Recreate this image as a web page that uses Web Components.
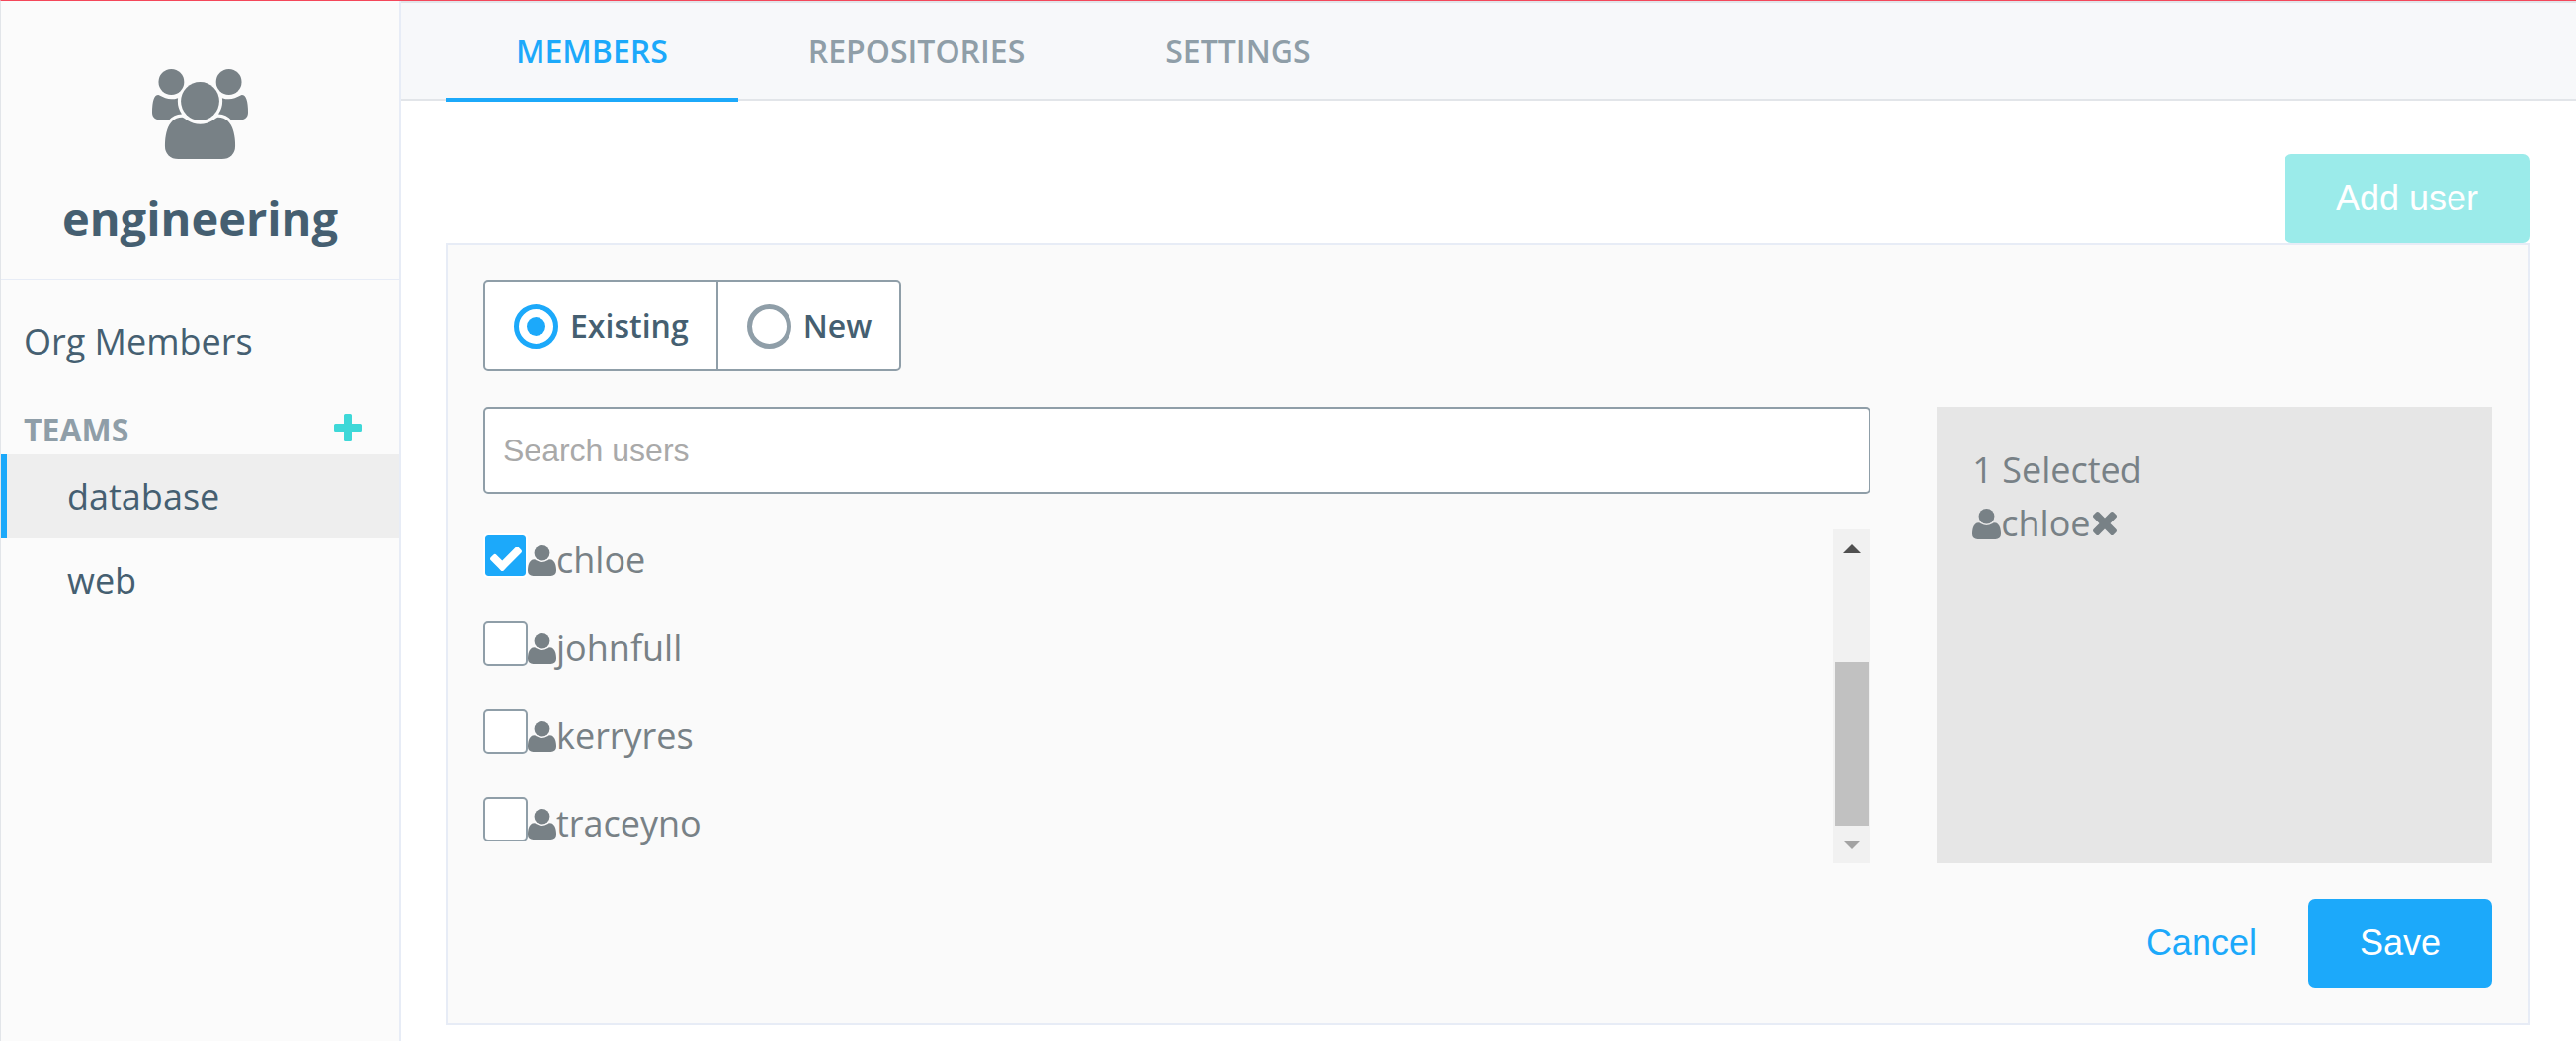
<!DOCTYPE html>
<html lang="en">
<head>
<meta charset="utf-8">
<title>engineering - Members</title>
<style>
  :root {
    --blue: #1ca9fa;
    --teal: #3ed8d8;
    --ink: #455f71;
    --muted: #8f9ea8;
    --grey: #788186;
    --line: #e7ecf6;
    --rule: #e2e5e9;
    --ui: "Open Sans", "Noto Sans", sans-serif;
    --control: "Liberation Sans", Arial, sans-serif;
  }
  html { background: #fff; }
  body { margin: 0; font: 36px/50px var(--ui); color: var(--grey); }
</style>
</head>
<body>
<org-page></org-page>

<script>
const PERSON = `<path d="M1664 1533q0 120-73 189.500t-194 69.500h-874q-121 0-194-69.500t-73-189.500q0-53 3.500-103.500t14-109 26.500-108.500 43-97.500 62-81 85.500-53.500 111.500-20q10 0 43 21.500t73 48 107 48 135 21.500 135-21.500 107-48 73-48 43-21.500q61 0 111.500 20t85.500 53.500 62 81 43 97.500 26.500 108.500 14 109 3.500 103.500z"/><circle cx="960" cy="640" r="384"/>`;

const ICONS = {
  users: ['0 0 1920 1792', PERSON + `<path d="M593 896q-162 5-265 128h-134q-82 0-138-40.500t-56-118.500q0-353 124-353 6 0 43.500 21t97.500 42.500 119 21.500q67 0 133-23-5 37-5 66 0 139 81 256z"/><path d="M1920 865q0 78-56 118.500t-138 40.500h-134q-103-123-265-128 81-117 81-256 0-29-5-66 66 23 133 23 59 0 119-21.500t97.500-42.500 43.500-21q124 0 124 353z"/><circle cx="384" cy="256" r="256"/><circle cx="1536" cy="256" r="256"/>`],
  user: ['256 256 1408 1536', PERSON],
  plus: ['0 0 28 32', `<path d="M11.500 0h5a1.500 1.500 0 0 1 1.500 1.500V10h8.500a1.500 1.500 0 0 1 1.500 1.500v5a1.500 1.500 0 0 1-1.500 1.500H18v8.500a1.500 1.500 0 0 1-1.500 1.500h-5a1.500 1.500 0 0 1-1.500-1.500V18H1.500A1.500 1.500 0 0 1 0 16.500v-5A1.500 1.500 0 0 1 1.500 10H10V1.500A1.500 1.500 0 0 1 11.500 0z"/>`],
  check: ['121 370 1550 1152', `<path d="M1671 566q0 40-28 68l-724 724-136 136q-28 28-68 28t-68-28l-136-136-362-362q-28-28-28-68t28-68l136-136q28-28 68-28t68 28l294 295 656-657q28-28 68-28t68 28l136 136q28 28 28 68z"/>`],
  times: ['302 366 1188 1188', `<path d="M1490 1322q0 40-28 68l-136 136q-28 28-68 28t-68-28l-294-294-294 294q-28 28-68 28t-68-28l-136-136q-28-28-28-68t28-68l294-294-294-294q-28-28-28-68t28-68l136-136q28-28 68-28t68 28l294 294 294-294q28-28 68-28t68 28l136 136q28 28 28 68t-28 68l-294 294 294 294q28 28 28 68z"/>`],
  up: ['0 0 18 9', `<path d="M0 9L9 0l9 9z"/>`],
  down: ['0 0 18 9', `<path d="M0 0l9 9 9-9z"/>`]
};

const BASE = `*, *::before, *::after { box-sizing: border-box; }
  button { font: inherit; color: inherit; background: none; border: 0; margin: 0; padding: 0; cursor: pointer; }
  a { color: inherit; text-decoration: none; }
  ul { list-style: none; margin: 0; padding: 0; }`;

function define(name, markup, setup) {
  const template = document.createElement('template');
  template.innerHTML = markup;
  customElements.define(name, class extends HTMLElement {
    constructor() {
      super();
      this.attachShadow({ mode: 'open' }).append(template.content.cloneNode(true));
    }
    connectedCallback() {
      if (setup && !this.ready) { this.ready = true; setup(this, this.shadowRoot); }
    }
  });
}

/* Icon: fills the box that its user gives it */
define('org-icon', `<style>
  :host { display: block; flex: none; }
  svg { display: block; width: 100%; height: 100%; fill: currentColor; }
</style><svg aria-hidden="true"></svg>`, (host, root) => {
  const [box, shape] = ICONS[host.getAttribute('name')];
  const svg = root.querySelector('svg');
  svg.setAttribute('viewBox', box);
  svg.setAttribute('preserveAspectRatio', 'none');
  svg.innerHTML = shape;
});

/* Push button: kind = primary | add | link */
define('org-button', `<style>${BASE}
  :host { display: block; }
  button { display: block; height: 90px; padding: 0 52px; border-radius: 7px; font: 36px/90px var(--control); color: #fff; background: var(--blue); }
  :host([kind="add"]) button { background: #9bebea; }
  :host([kind="link"]) button { background: none; color: var(--blue); }
</style><button type="button"><slot></slot></button>`);

define('org-sidebar', `<style>${BASE}
  :host { display: block; background: #fbfbfb; border-right: 2px solid var(--line); color: var(--ink); }
  header { display: flex; flex-direction: column; align-items: center; gap: 27px; padding: 69px 24px 28px; border-bottom: 2px solid var(--line); }
  header org-icon { width: 97px; height: 91px; color: var(--grey); }
  h1 { margin: 0; font-size: 47px; line-height: 66px; font-weight: 700; }
  .all { display: block; padding: 37px 23px 42px; }
  .head { display: flex; align-items: center; justify-content: space-between; padding: 0 38px 3px 23px; }
  h2 { margin: 0; font-size: 32px; line-height: 44px; font-weight: 700; color: var(--muted); }
  .head org-icon { width: 28px; height: 32px; color: var(--teal); }
  li a { display: block; line-height: 84px; padding: 1px 0 0 61px; border-left: 6px solid transparent; }
  li a[aria-current] { background: #eee; border-color: var(--blue); }
</style>
<header><org-icon name="users"></org-icon><h1>engineering</h1></header>
<nav>
  <a class="all" href="#members">Org Members</a>
  <div class="head"><h2>TEAMS</h2><button type="button" aria-label="Add team"><org-icon name="plus"></org-icon></button></div>
  <ul>
    <li><a href="#database" aria-current="page">database</a></li>
    <li><a href="#web">web</a></li>
  </ul>
</nav>`);

define('org-tabs', `<style>${BASE}
  :host { display: block; background: #f7f8fa; border: solid var(--rule); border-width: 2px 0; }
  nav { display: flex; margin: 0 45px -3px; }
  a { padding: 2px 71px 0; font-size: 32px; line-height: 94px; font-weight: 600; color: var(--muted); border-bottom: 4px solid transparent; }
  a[aria-current] { color: var(--blue); border-color: var(--blue); }
</style>
<nav>
  <a href="#members" aria-current="page">MEMBERS</a>
  <a href="#repositories">REPOSITORIES</a>
  <a href="#settings">SETTINGS</a>
</nav>`);

define('user-source', `<style>${BASE}
  :host { display: flex; }
  fieldset { display: flex; margin: 0; padding: 0; min-width: 0; background: #fff; border: 2px solid var(--muted); border-radius: 5px; }
  label { display: flex; align-items: center; gap: 12px; height: 88px; padding: 0 28px 0 29px; font-size: 32px; line-height: 44px; font-weight: 600; color: var(--ink); }
  label + label { border-left: 2px solid var(--muted); }
  input { appearance: none; display: grid; place-items: center; width: 45px; height: 45px; margin: 0; border: 5px solid var(--muted); border-radius: 50%; }
  input:checked { border-color: var(--blue); }
  input:checked::before { content: ""; width: 19px; height: 19px; border-radius: 50%; background: var(--blue); }
</style>
<fieldset aria-label="User type">
  <label><input type="radio" name="source" checked>Existing</label>
  <label><input type="radio" name="source">New</label>
</fieldset>`);

define('user-option', `<style>${BASE}
  :host { display: block; }
  label { display: flex; align-items: flex-end; height: 49px; line-height: 45px; }
  .box { display: grid; place-items: center; align-self: flex-start; }
  .box > * { grid-area: 1 / 1; }
  input { appearance: none; width: 45px; height: 45px; margin: 0; background: #fff; border: 2px solid var(--muted); border-radius: 5px; }
  input:checked { border-color: #fff; background: var(--blue); background-clip: padding-box; }
  .tick { width: 32px; height: 24px; margin-top: 6px; color: #fff; pointer-events: none; visibility: hidden; }
  input:checked + .tick { visibility: visible; }
  .who { width: 29px; height: 31px; margin-bottom: 6px; }
</style>
<label><span class="box"><input type="checkbox"><org-icon class="tick" name="check"></org-icon></span><org-icon class="who" name="user"></org-icon><slot></slot></label>`,
(host, root) => { root.querySelector('input').checked = host.hasAttribute('checked'); });

define('user-list', `<style>${BASE}
  :host { display: flex; height: 338px; overflow: hidden; }
  .rows { flex: 1; display: flex; flex-direction: column; gap: 40px; padding-top: 4px; }
  .bar { display: flex; flex-direction: column; width: 38px; background: #f1f1f1; }
  button { display: grid; place-items: center; height: 38px; color: #505050; }
  button:last-child { color: #a3a3a3; }
  button org-icon { width: 18px; height: 9px; }
  .track { flex: 1; display: flex; flex-direction: column; justify-content: flex-end; padding: 0 2px; }
  .thumb { height: 166px; background: #c1c1c1; }
</style>
<div class="rows"><slot></slot></div>
<div class="bar">
  <button type="button" aria-label="Scroll up"><org-icon name="up"></org-icon></button>
  <div class="track"><div class="thumb"></div></div>
  <button type="button" aria-label="Scroll down"><org-icon name="down"></org-icon></button>
</div>`);

define('user-search', `<style>${BASE}
  :host { display: block; }
  input { display: block; width: 100%; height: 88px; padding: 0 18px; font: 32px/44px var(--control); color: var(--ink); background: #fff; border: 2px solid var(--muted); border-radius: 5px; }
  input::placeholder { color: #a9a9a9; opacity: 1; }
</style><input type="search" placeholder="Search users" aria-label="Search users">`);

define('selected-users', `<style>${BASE}
  :host { display: block; padding: 37px 36px 36px; background: #e6e6e6; line-height: 54px; }
  p { margin: 0; }
  li { display: flex; align-items: center; }
  .who { width: 29px; height: 31px; }
  .x { width: 24px; height: 24px; margin-left: 2px; }
</style>
<p>1 Selected</p>
<ul><li><org-icon class="who" name="user"></org-icon><span>chloe</span><button type="button" aria-label="Remove chloe"><org-icon class="x" name="times"></org-icon></button></li></ul>`);

define('add-user-panel', `<style>${BASE}
  :host { display: flex; flex-direction: column; gap: 36px; padding: 36px; background: #fafafa; border: 2px solid var(--line); }
  .cols { display: grid; grid-template-columns: minmax(0, 5fr) minmax(0, 2fr); column-gap: 67px; }
  .pick { display: flex; flex-direction: column; gap: 36px; }
  footer { display: flex; justify-content: flex-end; }
</style>
<user-source></user-source>
<div class="cols">
  <div class="pick">
    <user-search></user-search>
    <user-list>
      <user-option checked>chloe</user-option>
      <user-option>johnfull</user-option>
      <user-option>kerryres</user-option>
      <user-option>traceyno</user-option>
    </user-list>
  </div>
  <selected-users></selected-users>
</div>
<footer><org-button kind="link">Cancel</org-button><org-button>Save</org-button></footer>`);

define('org-page', `<style>${BASE}
  :host { display: grid; grid-template-columns: 405px minmax(0, 1fr); min-height: 100vh; box-sizing: border-box; border-top: 1px solid #f4475a; border-left: 1px solid var(--rule); }
  section { display: flex; flex-direction: column; padding: 54px 47px 16px 45px; }
  org-button { align-self: flex-end; }
</style>
<org-sidebar></org-sidebar>
<main>
  <org-tabs></org-tabs>
  <section>
    <org-button kind="add">Add user</org-button>
    <add-user-panel></add-user-panel>
  </section>
</main>`);
</script>
</body>
</html>
